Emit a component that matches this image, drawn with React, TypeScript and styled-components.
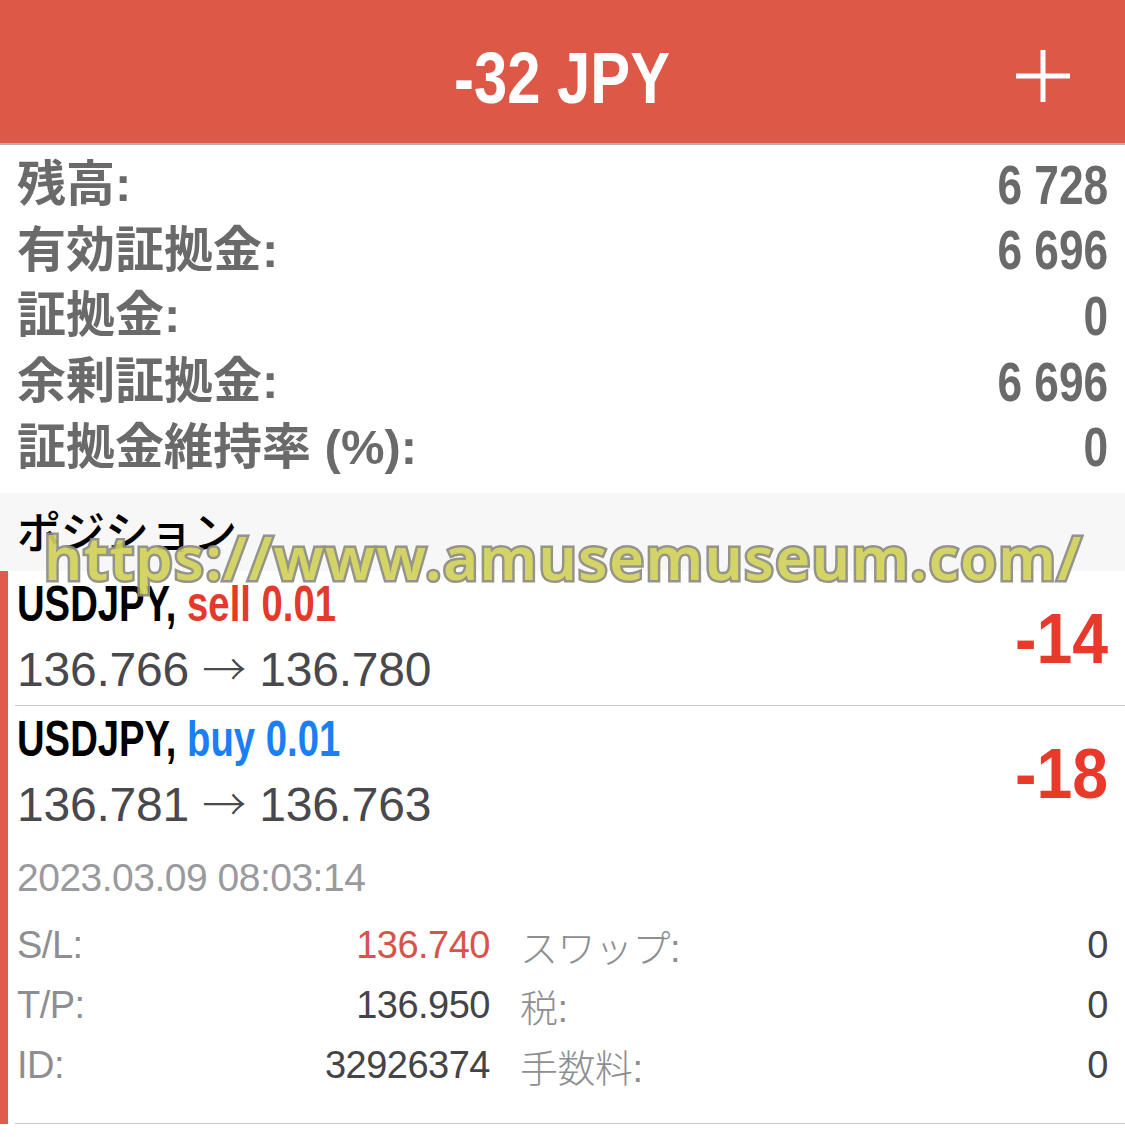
import React from 'react'
import styled, { createGlobalStyle } from 'styled-components'

const GlobalStyle = createGlobalStyle`
    html, body {
        margin: 0;
        padding: 0;
        background: #fff;
    }
    * {
        box-sizing: border-box;
    }
`

const BOLD = `"Liberation Sans", Arial, sans-serif`
const SANS = `"Liberation Sans", Arial, sans-serif`
const CJK = `"Liberation Sans", "Noto Sans CJK JP", sans-serif`

const summary = [
    { label: '残高:', value: '6 728' },
    { label: '有効証拠金:', value: '6 696' },
    { label: '証拠金:', value: '0' },
    { label: '余剰証拠金:', value: '6 696' },
    { label: '証拠金維持率 (%):', value: '0' },
]

type Position = {
    symbol: string
    side: 'sell' | 'buy'
    volume: string
    open: string
    current: string
    profit: string
    expanded?: boolean
}

const positions: Position[] = [
    { symbol: 'USDJPY', side: 'sell', volume: '0.01', open: '136.766', current: '136.780', profit: '-14' },
    { symbol: 'USDJPY', side: 'buy', volume: '0.01', open: '136.781', current: '136.763', profit: '-18', expanded: true },
]

const details = [
    { label: 'S/L:', value: '136.740', red: true, label2: 'スワップ:', value2: '0' },
    { label: 'T/P:', value: '136.950', label2: '税:', value2: '0' },
    { label: 'ID:', value: '32926374', label2: '手数料:', value2: '0' },
]

const PlusIcon = () => (
    <svg width="56" height="56" viewBox="0 0 56 56">
        <line x1="28" y1="2" x2="28" y2="54" stroke="#fff" strokeWidth="5" />
        <line x1="1" y1="28" x2="55" y2="28" stroke="#fff" strokeWidth="5" />
    </svg>
)

const App = () => {
    return (
        <Page>
            <GlobalStyle />
            <Header>
                <span />
                <HeaderTitle>-32 JPY</HeaderTitle>
                <HeaderAction>
                    <PlusIcon />
                </HeaderAction>
            </Header>

            <Summary>
                {summary.map((row) => (
                    <SummaryRow key={row.label}>
                        <SummaryLabel>{row.label}</SummaryLabel>
                        <SummaryValue>{row.value}</SummaryValue>
                    </SummaryRow>
                ))}
            </Summary>

            <SectionHeader>ポジション</SectionHeader>

            {positions.map((p, i) => (
                <PositionItem key={i}>
                    <SideBar />
                    <PositionBody>
                        <PositionHead>
                            <div>
                                <PositionTitle>
                                    <span>
                                        {p.symbol}, <SideText side={p.side}>{p.side} {p.volume}</SideText>
                                    </span>
                                </PositionTitle>
                                <PriceLine>
                                    {p.open} <Arrow>→</Arrow> {p.current}
                                </PriceLine>
                            </div>
                            <Profit>{p.profit}</Profit>
                        </PositionHead>
                        {p.expanded && (
                            <>
                                <DateLine>2023.03.09 08:03:14</DateLine>
                                <DetailGrid>
                                    {details.map((d) => (
                                        <React.Fragment key={d.label}>
                                            <DetailCell>
                                                <DetailLabel>{d.label}</DetailLabel>
                                                <DetailValue red={d.red}>{d.value}</DetailValue>
                                            </DetailCell>
                                            <DetailCell>
                                                <DetailLabel light>{d.label2}</DetailLabel>
                                                <DetailValue>{d.value2}</DetailValue>
                                            </DetailCell>
                                        </React.Fragment>
                                    ))}
                                </DetailGrid>
                            </>
                        )}
                    </PositionBody>
                </PositionItem>
            ))}

            <Watermark>https://www.amusemuseum.com/</Watermark>
        </Page>
    )
}

/* PAGE */

const Page = styled.div`
    position: relative;
    width: 1125px;
    min-height: 1137px;
    background: #fff;
    overflow: hidden;
`

// condensed bold text: no condensed face installed, so squeeze horizontally
const Condensed = styled.div<{ scale: number; origin?: string }>`
    display: inline-block;
    font-family: ${BOLD};
    font-weight: 700;
    white-space: nowrap;
    transform: scaleX(${({ scale }) => scale});
    transform-origin: ${({ origin }) => origin || 'left'} center;
`

const Header = styled.div`
    display: grid;
    grid-template-columns: 1fr auto 1fr;
    align-items: center;
    height: 145px;
    background: #de5848;
    border-bottom: 2px solid #b9b1b0;
`

const HeaderTitle = styled(Condensed).attrs({ scale: 0.83, origin: 'center' })`
    color: #fff;
    font-size: 72px;
    line-height: 1;
    padding-top: 12px;
`

const HeaderAction = styled.div`
    display: flex;
    justify-content: flex-end;
    padding-right: 54px;
    padding-top: 8px;
`

/* SUMMARY */

const Summary = styled.div`
    padding: 7px 17px 13px 17px;
`

const SummaryRow = styled.div`
    display: flex;
    justify-content: space-between;
    align-items: center;
    height: 65.6px;
`

const SummaryLabel = styled.span`
    color: #6a6a6a;
    font-family: ${CJK};
    font-weight: 700;
    font-size: 49px;
    line-height: 1;
`

const SummaryValue = styled(Condensed).attrs({ scale: 0.79, origin: 'right' })`
    color: #6a6a6a;
    font-size: 56px;
    line-height: 1;
`

const SectionHeader = styled.div`
    display: flex;
    align-items: center;
    height: 78px;
    padding: 0 17px 4px;
    background: #f7f7f7;
    color: #000;
    font-family: "Noto Sans CJK JP", sans-serif;
    font-weight: 500;
    font-size: 44px;
`

/* POSITIONS */

const PositionItem = styled.div`
    display: flex;
`

const SideBar = styled.div`
    width: 8px;
    flex-shrink: 0;
    background: #e05a4d;
`

const PositionBody = styled.div`
    flex: 1;
    margin-left: 7px;
    padding: 0 17px 0 2px;
    border-bottom: 1.5px solid #c9c9c9;
`

const PositionHead = styled.div`
    display: flex;
    justify-content: space-between;
    align-items: center;
    height: 134px;
    padding-top: 2px;
`

const PositionTitle = styled(Condensed).attrs({ scale: 0.765 })`
    display: block;
    color: #000;
    font-size: 50px;
    line-height: 56px;
`

const SideText = styled.span<{ side: 'sell' | 'buy' }>`
    color: ${({ side }) => (side === 'sell' ? '#e5392b' : '#1a7ef5')};
`

const PriceLine = styled.div`
    margin-top: 4px;
    color: #48484d;
    font-family: ${SANS};
    font-size: 48px;
    letter-spacing: -0.2px;
    line-height: 62px;
`

const Arrow = styled.span`
    font-family: "Noto Sans CJK JP", sans-serif;
    font-weight: 300;
    font-size: 44px;
`

const Profit = styled(Condensed).attrs({ scale: 0.92, origin: 'right' })`
    color: #e8392b;
    font-size: 70px;
    line-height: 1;
`

const DateLine = styled.div`
    margin-top: 13px;
    color: #9a9a9e;
    font-family: ${SANS};
    font-size: 39px;
    letter-spacing: -0.5px;
    line-height: 50px;
`

const DetailGrid = styled.div`
    display: grid;
    grid-template-columns: 473px 1fr;
    column-gap: 30px;
    grid-auto-rows: 60px;
    margin-top: 13px;
    padding-bottom: 27px;
`

const DetailCell = styled.div`
    display: flex;
    justify-content: space-between;
    align-items: center;
`

const DetailLabel = styled.span<{ light?: boolean }>`
    color: #8e8e92;
    font-family: ${CJK};
    font-weight: ${({ light }) => (light ? 300 : 400)};
    font-size: 38px;
    letter-spacing: -0.5px;
`

const DetailValue = styled.span<{ red?: boolean }>`
    color: ${({ red }) => (red ? '#d9534a' : '#444448')};
    font-family: ${SANS};
    font-size: 38px;
    letter-spacing: -0.5px;
`

/* WATERMARK */

const Watermark = styled.div`
    position: absolute;
    top: 526px;
    left: 44px;
    color: #d2d25a;
    font-family: "Noto Sans", "DejaVu Sans", sans-serif;
    font-weight: 600;
    font-size: 60px;
    letter-spacing: 1.4px;
    line-height: 62px;
    white-space: nowrap;
    -webkit-text-stroke: 5px #8c8c82;
    paint-order: stroke fill;
    opacity: 0.92;
    pointer-events: none;
`

export default App
